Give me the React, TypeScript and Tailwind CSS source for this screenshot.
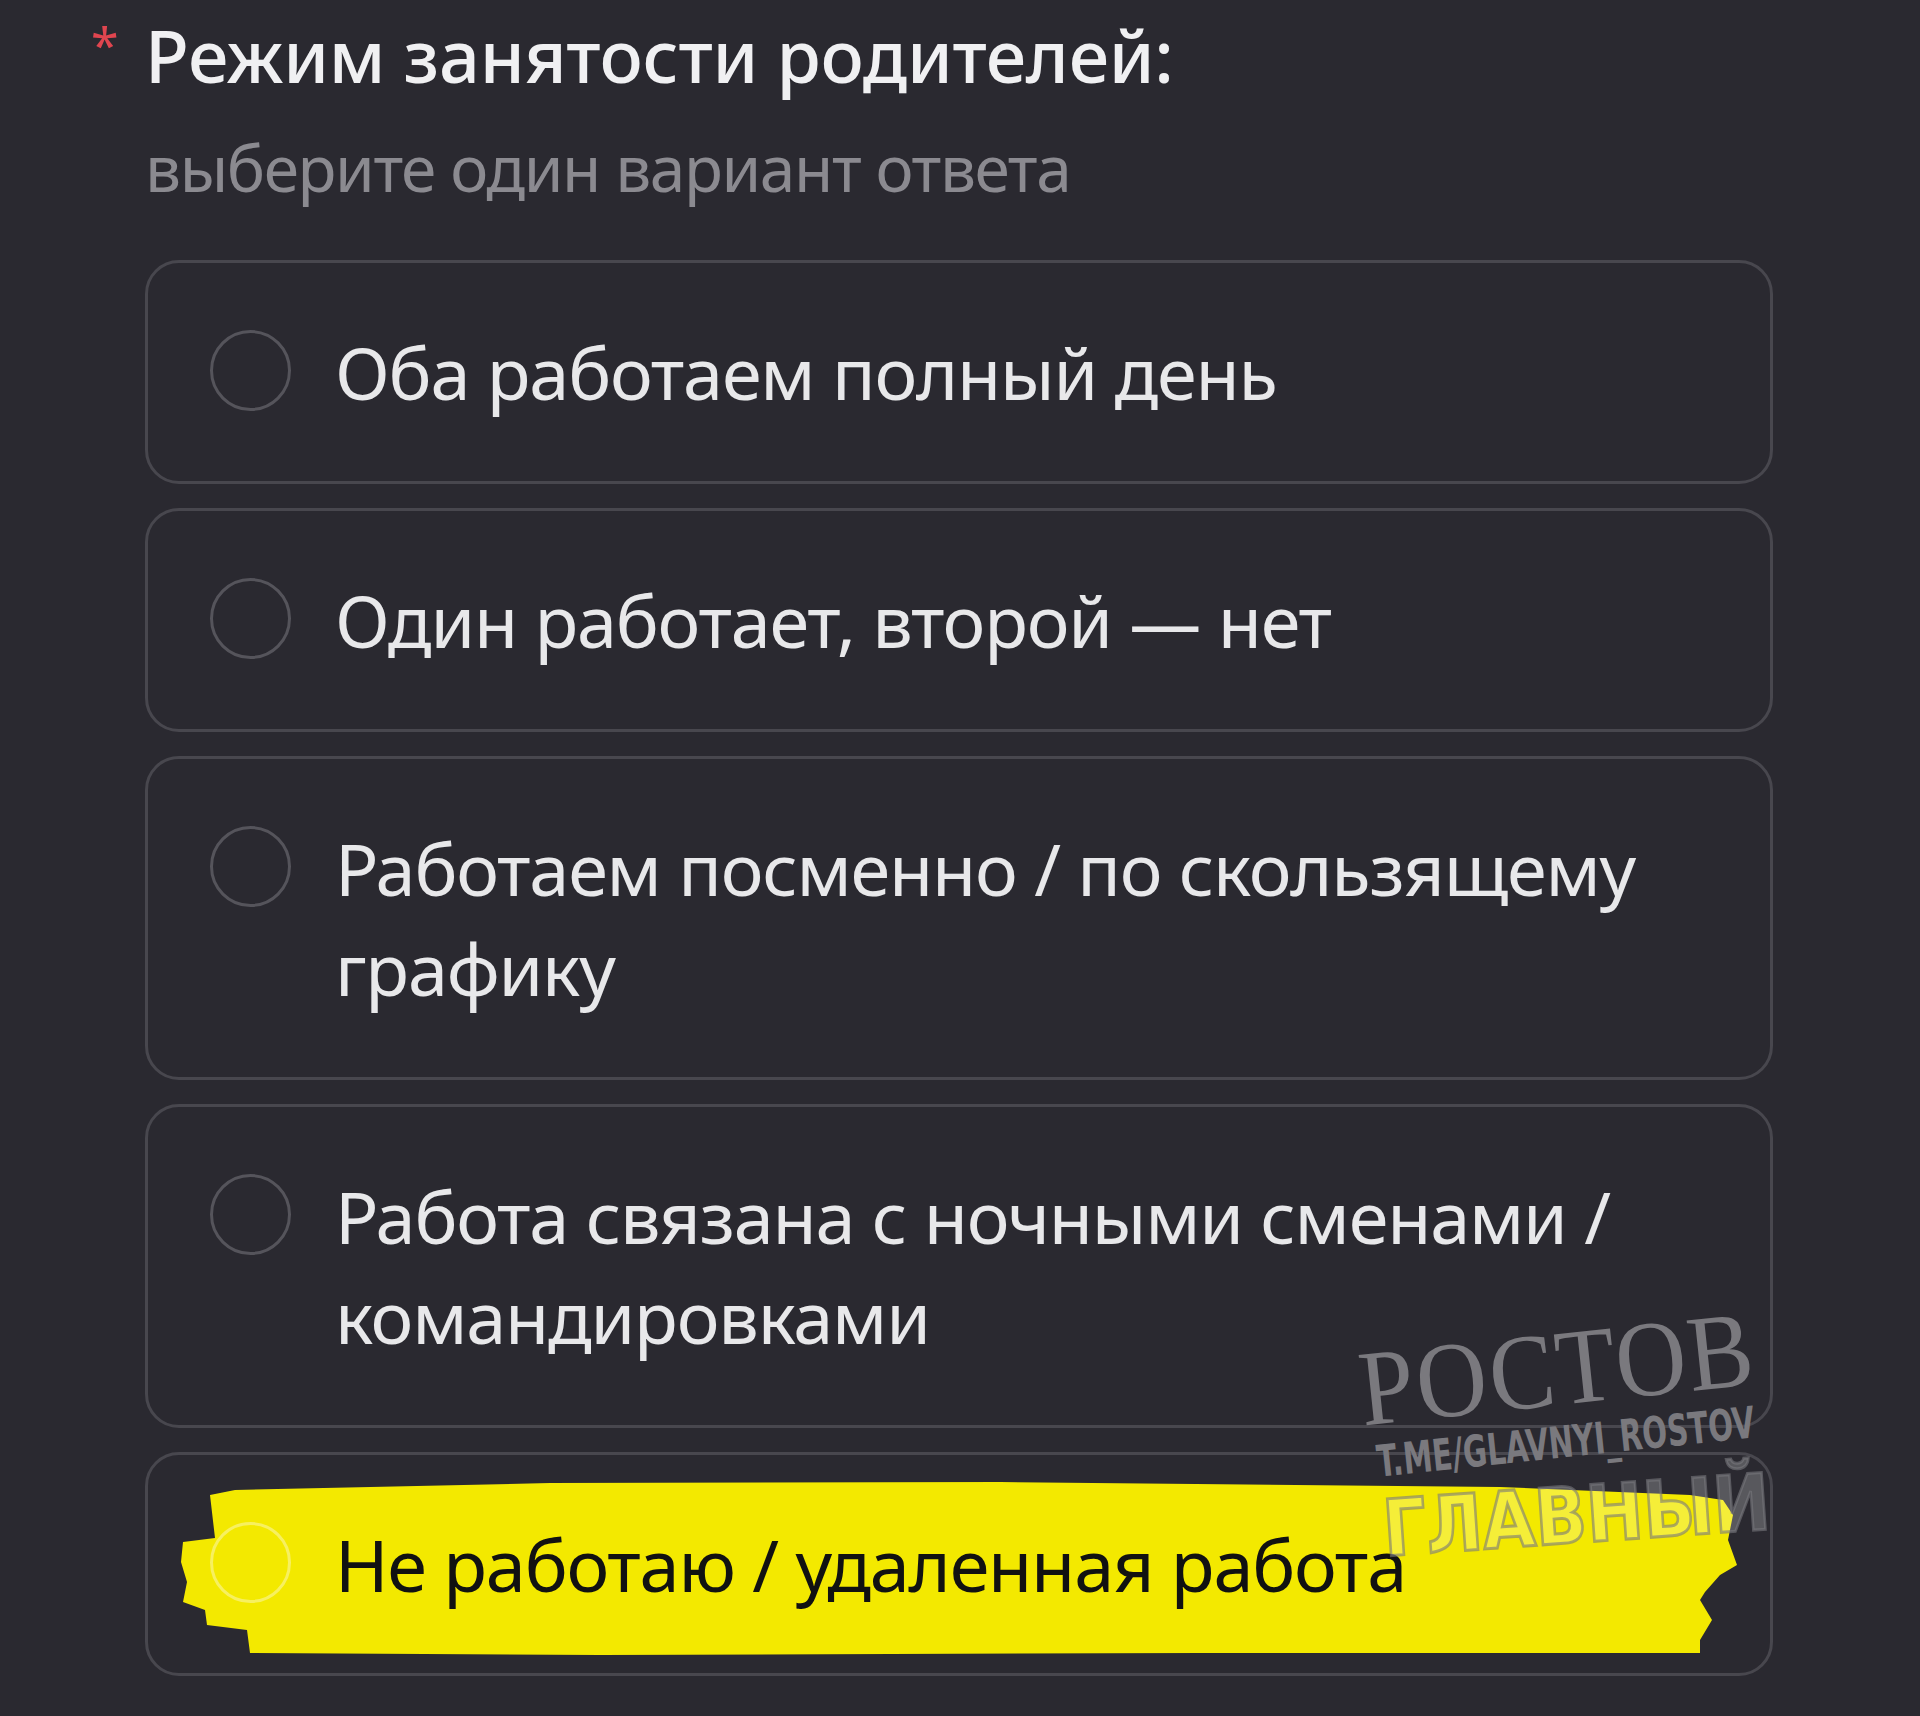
import React from 'react';

const options = [
  'Оба работаем полный день',
  'Один работает, второй — нет',
  'Работаем посменно / по скользящему графику',
  'Работа связана с ночными сменами / командировками',
];

function Radio({highlighted}: {highlighted?: boolean}) {
  return (
    <span
      className={`mt-[8px] block h-[81px] w-[81px] shrink-0 rounded-full border-[3px] ${
        highlighted ? 'border-[#f7f060]' : 'border-[#55545b]'
      }`}
    />
  );
}

// marker stroke drawn over the last answer
function Highlight() {
  return (
    <svg className="absolute -left-[3px] -top-[3px] h-[224px] w-[1628px]" viewBox="0 0 1628 224">
      <polygon
        fill="#f3e900"
        points="65,43 90,38 405,31 855,30 1355,35 1545,43 1578,48 1588,63 1583,88 1592,113 1575,123 1560,140 1555,148 1567,168 1555,188 1555,201 1055,201 455,203 105,201 102,178 62,173 60,158 38,150 42,130 36,110 38,90 70,86"
      />
    </svg>
  );
}

function Watermark() {
  return (
    <>
      <div
        className="pointer-events-none absolute left-[1365px] top-[1345px] origin-bottom-left -rotate-[6deg] scale-y-[1.1] text-[98px] leading-none tracking-[1.5px] text-[#7a797e]"
        style={{fontFamily: '"Liberation Serif", serif'}}
      >
        РОСТОВ
      </div>
      <div
        className="pointer-events-none absolute left-[1377px] top-[1443px] origin-left -rotate-[6deg] scale-x-[0.86] scale-y-[1.15] text-[38px] font-bold leading-none text-[#7a797e]"
        style={{fontFamily: '"DejaVu Sans Condensed", "DejaVu Sans", sans-serif'}}
      >
        T.ME/GLAVNYI_ROSTOV
      </div>
      <div
        className="pointer-events-none absolute left-[1383px] top-[1490px] origin-left -rotate-[4deg] scale-x-[0.87] text-[78px] font-bold leading-none text-[rgba(255,255,255,0.22)] [-webkit-text-stroke:3px_rgba(120,120,125,0.6)]"
        style={{fontFamily: '"DejaVu Sans", sans-serif'}}
      >
        ГЛАВНЫЙ
      </div>
    </>
  );
}

export default function App() {
  return (
    <div
      className="relative h-[1716px] w-[1920px] overflow-hidden bg-[#2a2930] pl-[145px] pt-[15px]"
      style={{fontFamily: '"Noto Sans", "Open Sans", sans-serif'}}
    >
      <div className="relative">
        <span className="absolute -left-[54px] top-[5px] text-[50px] leading-none text-[#e0454f]">*</span>
        <h1 className="text-[72px] font-medium leading-[80px] tracking-[-0.3px] text-[#f0f0f2]">
          Режим занятости родителей:
        </h1>
      </div>
      <p className="mt-[38px] text-[64px] leading-[70px] tracking-[-1.4px] text-[#8b8a90]">
        выберите один вариант ответа
      </p>

      <div className="mt-[57px] flex w-[1628px] flex-col gap-[24px]">
        {options.map((o) => (
          <div
            key={o}
            className="flex items-start gap-[44px] rounded-[34px] border-[3px] border-[#48474e] py-[59px] pl-[62px] pr-[60px]"
          >
            <Radio />
            <span className="text-[72px] leading-[100px] tracking-[-1.2px] text-[#e8e8ea]">{o}</span>
          </div>
        ))}
        <div className="relative flex items-start gap-[44px] rounded-[34px] border-[3px] border-[#48474e] py-[59px] pl-[62px] pr-[60px]">
          <Highlight />
          <span className="relative">
            <Radio highlighted />
          </span>
          <span className="relative text-[72px] leading-[100px] tracking-[-1.2px] text-[#111111]">
            Не работаю / удаленная работа
          </span>
        </div>
      </div>

      <Watermark />
    </div>
  );
}
